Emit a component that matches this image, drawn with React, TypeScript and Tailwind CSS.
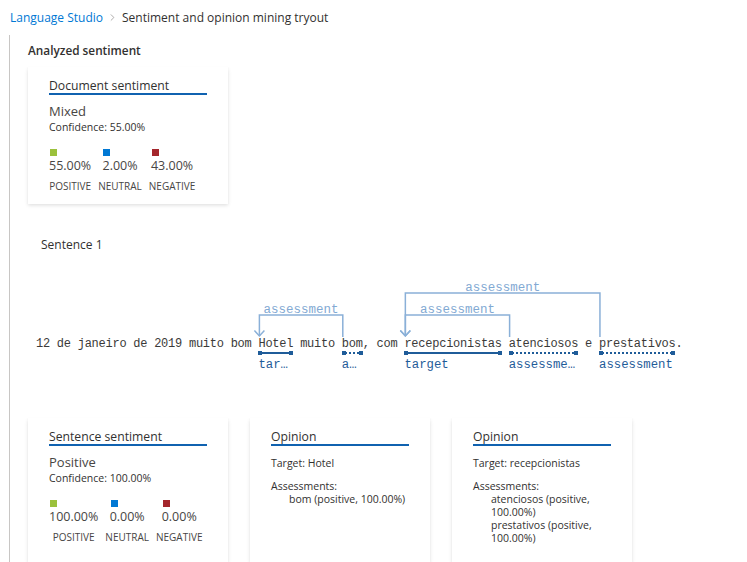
import * as React from 'react';
import { ChevronRight } from 'lucide-react';

// sentence is drawn in a monospace font so character index -> x is exact
const CW = 6.95;
const SENTENCE =
  '12 de janeiro de 2019 muito bom Hotel muito bom, com recepcionistas atenciosos e prestativos.';

type Tag = { start: number; word: string; label: string; dotted: boolean };

const tags: Tag[] = [
  { start: 32, word: 'Hotel', label: 'target', dotted: false },
  { start: 44, word: 'bom', label: 'assessment', dotted: true },
  { start: 53, word: 'recepcionistas', label: 'target', dotted: false },
  { start: 68, word: 'atenciosos', label: 'assessment', dotted: true },
  { start: 81, word: 'prestativos', label: 'assessment', dotted: true },
];

const arcs = [
  { from: 32, to: 44, y: 35 },
  { from: 53, to: 68, y: 35 },
  { from: 53, to: 81, y: 13 },
];

type Score = { value: string; name: string; color: string };

const docScores: Score[] = [
  { value: '55.00%', name: 'POSITIVE', color: 'bg-[#9bc13c]' },
  { value: '2.00%', name: 'NEUTRAL', color: 'bg-[#0078d4]' },
  { value: '43.00%', name: 'NEGATIVE', color: 'bg-[#a4262c]' },
];

const sentScores: Score[] = [
  { value: '100.00%', name: 'POSITIVE', color: 'bg-[#9bc13c]' },
  { value: '0.00%', name: 'NEUTRAL', color: 'bg-[#0078d4]' },
  { value: '0.00%', name: 'NEGATIVE', color: 'bg-[#a4262c]' },
];

const Card: React.FC<{ className?: string; children: React.ReactNode }> = ({ className = '', children }) => (
  <div
    className={`bg-white px-[21px] pt-[10px] shadow-[0_1.6px_3.6px_rgba(0,0,0,0.13),0_0.3px_0.9px_rgba(0,0,0,0.11)] ${className}`}
  >
    {children}
  </div>
);

const CardTitle: React.FC<{ children: React.ReactNode }> = ({ children }) => (
  <div className="border-b-2 border-[#1062b0] pt-[1px] text-[12.2px] leading-[15px] text-[#323130]">{children}</div>
);

const SentimentCard: React.FC<{ title: string; label: string; confidence: string; scores: Score[]; className?: string }> = ({
  title,
  label,
  confidence,
  scores,
  className = '',
}) => (
  <Card className={`w-[200px] pb-[11px] ${className}`}>
    <CardTitle>{title}</CardTitle>
    <div className="mt-[7px] text-[13px] leading-[18px] text-[#484644]">{label}</div>
    <div className="text-[10.5px] leading-[14px] text-[#323130]">Confidence: {confidence}</div>
    <div className="mt-[15px] flex gap-[7px]">
      {scores.map((s) => (
        <div key={s.name} className="flex flex-col items-center">
          <div className="flex flex-col items-start">
            <span className={`ml-[1px] h-[7px] w-[7px] ${s.color}`} />
            <span className="mt-[1px] text-[12.5px] leading-[18px] text-[#484644]">{s.value}</span>
          </div>
          <span className="mt-[4px] text-[10px] leading-[14px] text-[#484644]">{s.name}</span>
        </div>
      ))}
    </div>
  </Card>
);

const OpinionCard: React.FC<{ target: string; items: string[] }> = ({ target, items }) => (
  <Card className="w-[180px] pb-[17px]">
    <CardTitle>Opinion</CardTitle>
    <div className="mt-[10px] text-[10.5px] leading-[14px] text-[#323130]">Target: {target}</div>
    <div className="mt-[10px] text-[10.5px] leading-[13px] text-[#323130]">
      <div>Assessments:</div>
      <div className="pl-[18px]">
        {items.map((it) => (
          <div key={it}>{it}</div>
        ))}
      </div>
    </div>
  </Card>
);

const Underline: React.FC<{ dotted: boolean }> = ({ dotted }) => (
  <span className="relative block h-[4px] w-full">
    <span
      className={`absolute left-0 right-0 top-[1px] border-t-2 border-[#1f5c99] ${dotted ? 'border-dotted' : 'border-solid'}`}
    />
    <span className="absolute left-0 top-0 h-[4px] w-[4px] bg-[#1f5c99]" />
    <span className="absolute right-0 top-0 h-[4px] w-[4px] bg-[#1f5c99]" />
  </span>
);

const AnnotatedSentence: React.FC = () => {
  const pieces: React.ReactNode[] = [];
  let pos = 0;
  tags.forEach((t) => {
    if (t.start > pos) {
      pieces.push(
        <span key={`p${pos}`} className="whitespace-pre">
          {SENTENCE.slice(pos, t.start)}
        </span>
      );
    }
    pieces.push(
      <span key={`t${t.start}`} className="flex flex-col" style={{ width: t.word.length * CW }}>
        <span className="whitespace-pre">{t.word}</span>
        <Underline dotted={t.dotted} />
        <span className="mt-[3px] overflow-hidden text-ellipsis whitespace-nowrap font-['Liberation_Mono',monospace] text-[12.3px] leading-[14px] tracking-normal text-[#1f5c99]">
          {t.label}
        </span>
      </span>
    );
    pos = t.start + t.word.length;
  });
  if (pos < SENTENCE.length) {
    pieces.push(
      <span key="end" className="whitespace-pre">
        {SENTENCE.slice(pos)}
      </span>
    );
  }

  return (
    <div className="relative ml-[8px] mt-[26px] pt-[57px]">
      <svg className="absolute left-0 top-0" width={660} height={58} viewBox="0 0 660 58">
        {arcs.map((a, i) => {
          const x1 = a.from * CW + 1;
          const x2 = a.to * CW + 1;
          return (
            <g key={i} fill="none" stroke="#8ab0d8" strokeWidth={1.5}>
              <polyline points={`${x1},56 ${x1},${a.y} ${x2},${a.y} ${x2},57`} />
              <polyline points={`${x1 - 5},50.5 ${x1},56 ${x1 + 5},50.5`} />
              <text
                x={(x1 + x2) / 2}
                y={a.y - 2}
                textAnchor="middle"
                stroke="none"
                fill="#82a9d3"
                fontFamily="'Liberation Mono', monospace"
                fontSize={12.5}
              >
                assessment
              </text>
            </g>
          );
        })}
      </svg>
      <div className="flex items-start font-['Liberation_Mono',monospace] text-[12px] leading-[14px] tracking-[-0.25px] text-[#3b3a39]">
        {pieces}
      </div>
    </div>
  );
};

const App: React.FC = () => {
  return (
    <div className="min-h-screen bg-white font-['Open_Sans',sans-serif] text-[#323130]">
      <nav className="flex h-[35px] items-center pl-[10px] text-[12px]">
        <span className="text-[#0078d4]">Language Studio</span>
        <ChevronRight size={11} strokeWidth={1.5} className="mx-[4px] text-[#8a8886]" />
        <span>Sentiment and opinion mining tryout</span>
      </nav>

      <div className="ml-[9px] min-h-[527px] border-l border-[#c8c6c4] pl-[18px] pt-[6px]">
        <h2 className="text-[11.8px] font-semibold leading-[18px]">Analyzed sentiment</h2>

        <SentimentCard
          className="mt-[8px]"
          title="Document sentiment"
          label="Mixed"
          confidence="55.00%"
          scores={docScores}
        />

        <div className="mt-[32px] pl-[13px] text-[12px] leading-[18px]">Sentence 1</div>

        <AnnotatedSentence />

        <div className="mt-[46px] flex items-stretch gap-[22px]">
          <SentimentCard title="Sentence sentiment" label="Positive" confidence="100.00%" scores={sentScores} />
          <OpinionCard target="Hotel" items={['bom (positive, 100.00%)']} />
          <OpinionCard
            target="recepcionistas"
            items={['atenciosos (positive, 100.00%)', 'prestativos (positive, 100.00%)']}
          />
        </div>
      </div>
    </div>
  );
};

export default App;
